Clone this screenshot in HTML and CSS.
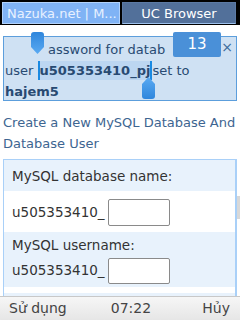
FILE: index.html
```html
<!DOCTYPE html>
<html lang="vi">
<head>
    <meta charset="UTF-8">
    <meta name="viewport" content="width=device-width, initial-scale=1.0">
    <title>Nazuka.net</title>
    <link rel="stylesheet" href="styles.css">
</head>
<body>
    <div class="pestanas">
        <div class="pestana activa">Nazuka.net | M...</div>
        <div class="pestana">UC Browser</div>
    </div>

    <div class="pagina">
        <!-- Aviso con texto seleccionado -->
        <div class="aviso">
            <p class="aviso-texto">
                <span class="linea-1">assword for datab</span><br>
                user <span class="seleccion">u505353410_pj</span>set to<br>
                <b>hajem5</b>
            </p>
            <div class="contador">13</div>
            <div class="cerrar">×</div>
            <svg class="tirador tirador-izq" width="13" height="22" viewBox="0 0 13 22">
                <defs>
                    <linearGradient id="g1" x1="0" y1="0" x2="0" y2="1">
                        <stop offset="0" stop-color="#2f86dc"/>
                        <stop offset="1" stop-color="#5aaaf2"/>
                    </linearGradient>
                </defs>
                <path d="M3 0 H10 Q13 0 13 3 V15 L6.5 22 L0 15 V3 Q0 0 3 0 Z" fill="url(#g1)"/>
            </svg>
            <svg class="tirador tirador-der" width="13" height="22" viewBox="0 0 13 22">
                <defs>
                    <linearGradient id="g2" x1="0" y1="0" x2="0" y2="1">
                        <stop offset="0" stop-color="#5aaaf2"/>
                        <stop offset="1" stop-color="#2f86dc"/>
                    </linearGradient>
                </defs>
                <path d="M6.5 0 L13 7 V19 Q13 22 10 22 H3 Q0 22 0 19 V7 Z" fill="url(#g2)"/>
            </svg>
        </div>

        <h2 class="titulo">Create a New MySQL Database And Database User</h2>

        <div class="formulario">
            <div class="etiqueta">MySQL database name:</div>
            <div class="campo">u505353410_<input type="text"></div>
            <div class="bloque">
                <div class="etiqueta-2">MySQL username:</div>
                <div class="campo-2">u505353410_<input type="text"></div>
            </div>
            <div class="hueco"></div>
            <div class="resto"></div>
        </div>
        <div class="barra-scroll"></div>
    </div>

    <footer class="pie">
        <span>Sử dụng</span>
        <span class="hora">07:22</span>
        <span>Hủy</span>
    </footer>
</body>
</html>
```

FILE: styles.css
```css
* {
    margin: 0;
    padding: 0;
    box-sizing: border-box;
    font-family: 'DejaVu Sans', sans-serif;
}

body {
    width: 240px;
    height: 320px;
    overflow: hidden;
    background: white;
    display: flex;
    flex-direction: column;
}

.pestanas {
    background: black;
    height: 25px;
    display: flex;
    gap: 2px;
    padding: 2px 4px 1px 2px;
}

.pestana {
    flex: 1;
    background: #52709a;
    border: 1px solid #5c7aa4;
    border-bottom-color: #9cc0ec;
    color: white;
    font-size: 13px;
    line-height: 21px;
    text-align: center;
    white-space: nowrap;
    overflow: hidden;
}

.pestana.activa {
    background: #80b3f5;
    border-color: #b2d2fb;
    color: #e8f1ff;
    text-align: left;
    padding-left: 4px;
}

.pagina {
    flex: 1;
    position: relative;
    padding: 11px 3px 0 3px;
    overflow: hidden;
}

.aviso {
    position: relative;
    background: #cfe1f3;
    border: 1px solid #5c9edc;
    height: 65px;
}

.aviso-texto {
    color: #284a72;
    font-size: 13px;
    line-height: 21px;
    padding: 2px 0 0 1px;
    white-space: nowrap;
}

.linea-1 {
    padding-left: 43px;
}

.seleccion {
    background: #bcd6f1;
    font-weight: bold;
    border-left: 2px solid #1a8ae2;
    border-right: 2px solid #1a8ae2;
    padding: 2px 0;
}

.contador {
    position: absolute;
    top: -5px;
    left: 169px;
    width: 48px;
    height: 25px;
    background: #4a90d8;
    border-radius: 2px;
    color: white;
    font-size: 15px;
    line-height: 25px;
    text-align: center;
}

.cerrar {
    position: absolute;
    top: 2px;
    right: 3px;
    color: #3b6b9c;
    font-size: 14px;
}

.tirador {
    position: absolute;
}

.tirador-izq {
    left: 27px;
    top: -5px;
}

.tirador-der {
    left: 138px;
    top: 40px;
}

.titulo {
    font-weight: normal;
    color: #3d6591;
    font-size: 13px;
    line-height: 21px;
    margin: 11px 0 0 0;
}

.formulario {
    margin-top: 5px;
    border: 1px solid #a9d0f8;
    border-bottom: none;
    border-right-width: 2px;
    color: #333;
    font-size: 13.5px;
}

.etiqueta {
    background: #e8f2fc;
    height: 31px;
    line-height: 33px;
    padding-left: 8px;
}

.campo, .campo-2 {
    display: flex;
    align-items: flex-start;
}

.campo {
    height: 41px;
    padding: 8px 0 0 8px;
    line-height: 27px;
}

.campo input, .campo-2 input {
    width: 62px;
    height: 27px;
    margin-left: 3px;
    border: 1px solid #8a8a8a;
    border-radius: 2px;
    background: white;
}

.bloque {
    background: #e8f2fc;
    height: 55px;
    padding-left: 8px;
}

.etiqueta-2 {
    line-height: 26px;
}

.campo-2 {
    line-height: 25px;
    height: 26px;
}

.campo-2 input {
    height: 26px;
}

.hueco {
    height: 6px;
    background: white;
}

.resto {
    height: 10px;
    background: #e8f2fc;
}

.barra-scroll {
    position: absolute;
    right: 0;
    top: 171px;
    width: 3px;
    height: 23px;
    background: #d8d8d8;
}

.pie {
    height: 24px;
    background: linear-gradient(#f6f6f6, #e6e6e6);
    border-top: 1px solid #c8c8c8;
    display: flex;
    padding: 0 10px 0 9px;
    color: #444;
    font-size: 14px;
    line-height: 23px;
}

.hora {
    margin-left: 44px;
}

.pie span:last-child {
    margin-left: auto;
}
```
